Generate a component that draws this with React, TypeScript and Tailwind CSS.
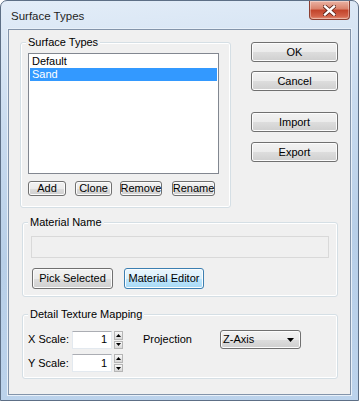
import React from 'react';

const btn =
  'flex items-center justify-center rounded-[3px] border border-[#707070] bg-[linear-gradient(#f2f2f2_0%,#ebebeb_50%,#dddddd_51%,#cfcfcf_100%)] text-black shadow-[inset_0_0_0_1px_#fcfcfc]';

function Group({ label, className, children }: { label: string; className: string; children: React.ReactNode }) {
  return (
    <div className={`relative rounded-[3px] border border-[#d5dfe5] shadow-[inset_0_0_0_1px_#ffffff] ${className}`}>
      <span className="absolute left-[5px] top-[-7px] bg-[#f0f0f0] px-[2px] leading-[13px]">{label}</span>
      {children}
    </div>
  );
}

function Spin() {
  return (
    <div className="ml-[2px] flex h-[18px] w-[9px] flex-col gap-px">
      <div className="flex h-[9px] items-center justify-center border border-[#b5b5b5] bg-[linear-gradient(#f8f8f8,#d8d8d8)]">
        <svg width="5" height="3" viewBox="0 0 5 3">
          <path d="M0 3 L2.5 0 L5 3 Z" fill="#000" />
        </svg>
      </div>
      <div className="flex h-[8px] items-center justify-center border border-[#b5b5b5] bg-[linear-gradient(#f8f8f8,#d8d8d8)]">
        <svg width="5" height="3" viewBox="0 0 5 3">
          <path d="M0 0 L5 0 L2.5 3 Z" fill="#000" />
        </svg>
      </div>
    </div>
  );
}

function ScaleRow({ label, children }: { label: string; children?: React.ReactNode }) {
  return (
    <div className="flex items-center">
      <span className="ml-[5px] w-[44px]">{label}</span>
      <div className="flex h-[18px] w-[40px] items-center justify-end border border-[#e3e9ef] border-t-[#abadb3] bg-white pr-[4px]">
        1
      </div>
      <Spin />
      {children}
    </div>
  );
}

export default function App() {
  return (
    <div className="h-[401px] w-[359px] overflow-hidden bg-white font-['Liberation_Sans',sans-serif] text-[11px] text-black">
      <div className="flex h-[401px] w-[359px] flex-col rounded-t-[7px] border border-[#5d6f86] bg-[linear-gradient(175deg,#e3edf8_0%,#c9dbef_30%,#b8cfe8_60%,#bcd3ec_100%)]">
        {/* Title bar */}
        <div className="flex h-[28px] items-start">
          <span className="ml-[10px] mt-[8px] text-[11.5px] leading-[14px] text-[#1e1e1e]">Surface Types</span>
          <div className="ml-auto mr-[8px] flex h-[19px] w-[41px] items-center justify-center rounded-b-[4px] border border-t-0 border-[#8c3f31] bg-[linear-gradient(#eab3a4_0%,#d9816a_45%,#c2432a_50%,#d3634a_85%,#e4967d_100%)] shadow-[inset_0_0_0_1px_rgba(255,255,255,0.35)]">
            <svg width="13" height="11" viewBox="0 0 13 11">
              <path d="M2 1.5 L11 9.5 M11 1.5 L2 9.5" stroke="#5a2117" strokeWidth="4" strokeLinecap="square" />
              <path d="M2 1.5 L11 9.5 M11 1.5 L2 9.5" stroke="#ffffff" strokeWidth="2.4" strokeLinecap="square" />
            </svg>
          </div>
        </div>

        {/* Client area */}
        <div className="ml-[7px] flex h-[366px] w-[343px] flex-col border border-[#8394aa] bg-[#f0f0f0] shadow-[0_0_0_1px_#e8f0f9]">
          <div className="flex">
            <Group label="Surface Types" className="ml-[11px] mt-[12px] h-[166px] w-[211px]">
              <div className="ml-[7px] mt-[10px] h-[121px] w-[191px] border border-[#828790] bg-white p-px">
                <div className="pl-[2px] leading-[13px]">Default</div>
                <div className="bg-[#3399ff] pl-[2px] leading-[13px] text-white">Sand</div>
              </div>
              <div className="mt-[7px] flex">
                <div className={`${btn} ml-[7px] h-[15px] w-[38px]`}>Add</div>
                <div className={`${btn} ml-[9px] h-[15px] w-[37px]`}>Clone</div>
                <div className={`${btn} ml-[8px] h-[15px] w-[42px]`}>Remove</div>
                <div className={`${btn} ml-[10px] h-[15px] w-[43px]`}>Rename</div>
              </div>
            </Group>

            <div className="ml-[20px] mt-[12px] flex flex-col">
              <div className={`${btn} h-[20px] w-[87px]`}>OK</div>
              <div className={`${btn} mt-[9px] h-[20px] w-[87px]`}>Cancel</div>
              <div className={`${btn} mt-[21px] h-[20px] w-[87px]`}>Import</div>
              <div className={`${btn} mt-[10px] h-[20px] w-[87px]`}>Export</div>
            </div>
          </div>

          <Group label="Material Name" className="ml-[13px] mt-[14px] h-[75px] w-[316px]">
            <div className="ml-[8px] mt-[13px] h-[22px] w-[298px] border border-[#d9d9d9] bg-[#f0f0f0]" />
            <div className="mt-[10px] flex">
              <div className={`${btn} ml-[9px] h-[21px] w-[81px]`}>Pick Selected</div>
              <div className="ml-[11px] flex h-[21px] w-[80px] items-center justify-center rounded-[3px] border border-[#3c7fb1] bg-[linear-gradient(#eaf6fd_0%,#d9f0fc_50%,#bee6fd_51%,#a7d9f5_100%)] shadow-[inset_0_0_0_1px_#fcfcfc]">
                Material Editor
              </div>
            </div>
          </Group>

          <Group label="Detail Texture Mapping" className="ml-[13px] mt-[17px] h-[65px] w-[316px]">
            <div className="mt-[15px] flex flex-col gap-[5px]">
              <ScaleRow label="X Scale:">
                <span className="ml-[20px] w-[77px]">Projection</span>
                <div className={`${btn} h-[19px] w-[81px] !justify-between pl-[2px] pr-[6px]`}>
                  <span>Z-Axis</span>
                  <svg width="7" height="4" viewBox="0 0 7 4">
                    <path d="M0 0 L7 0 L3.5 4 Z" fill="#000" />
                  </svg>
                </div>
              </ScaleRow>
              <ScaleRow label="Y Scale:" />
            </div>
          </Group>
        </div>
      </div>
    </div>
  );
}
